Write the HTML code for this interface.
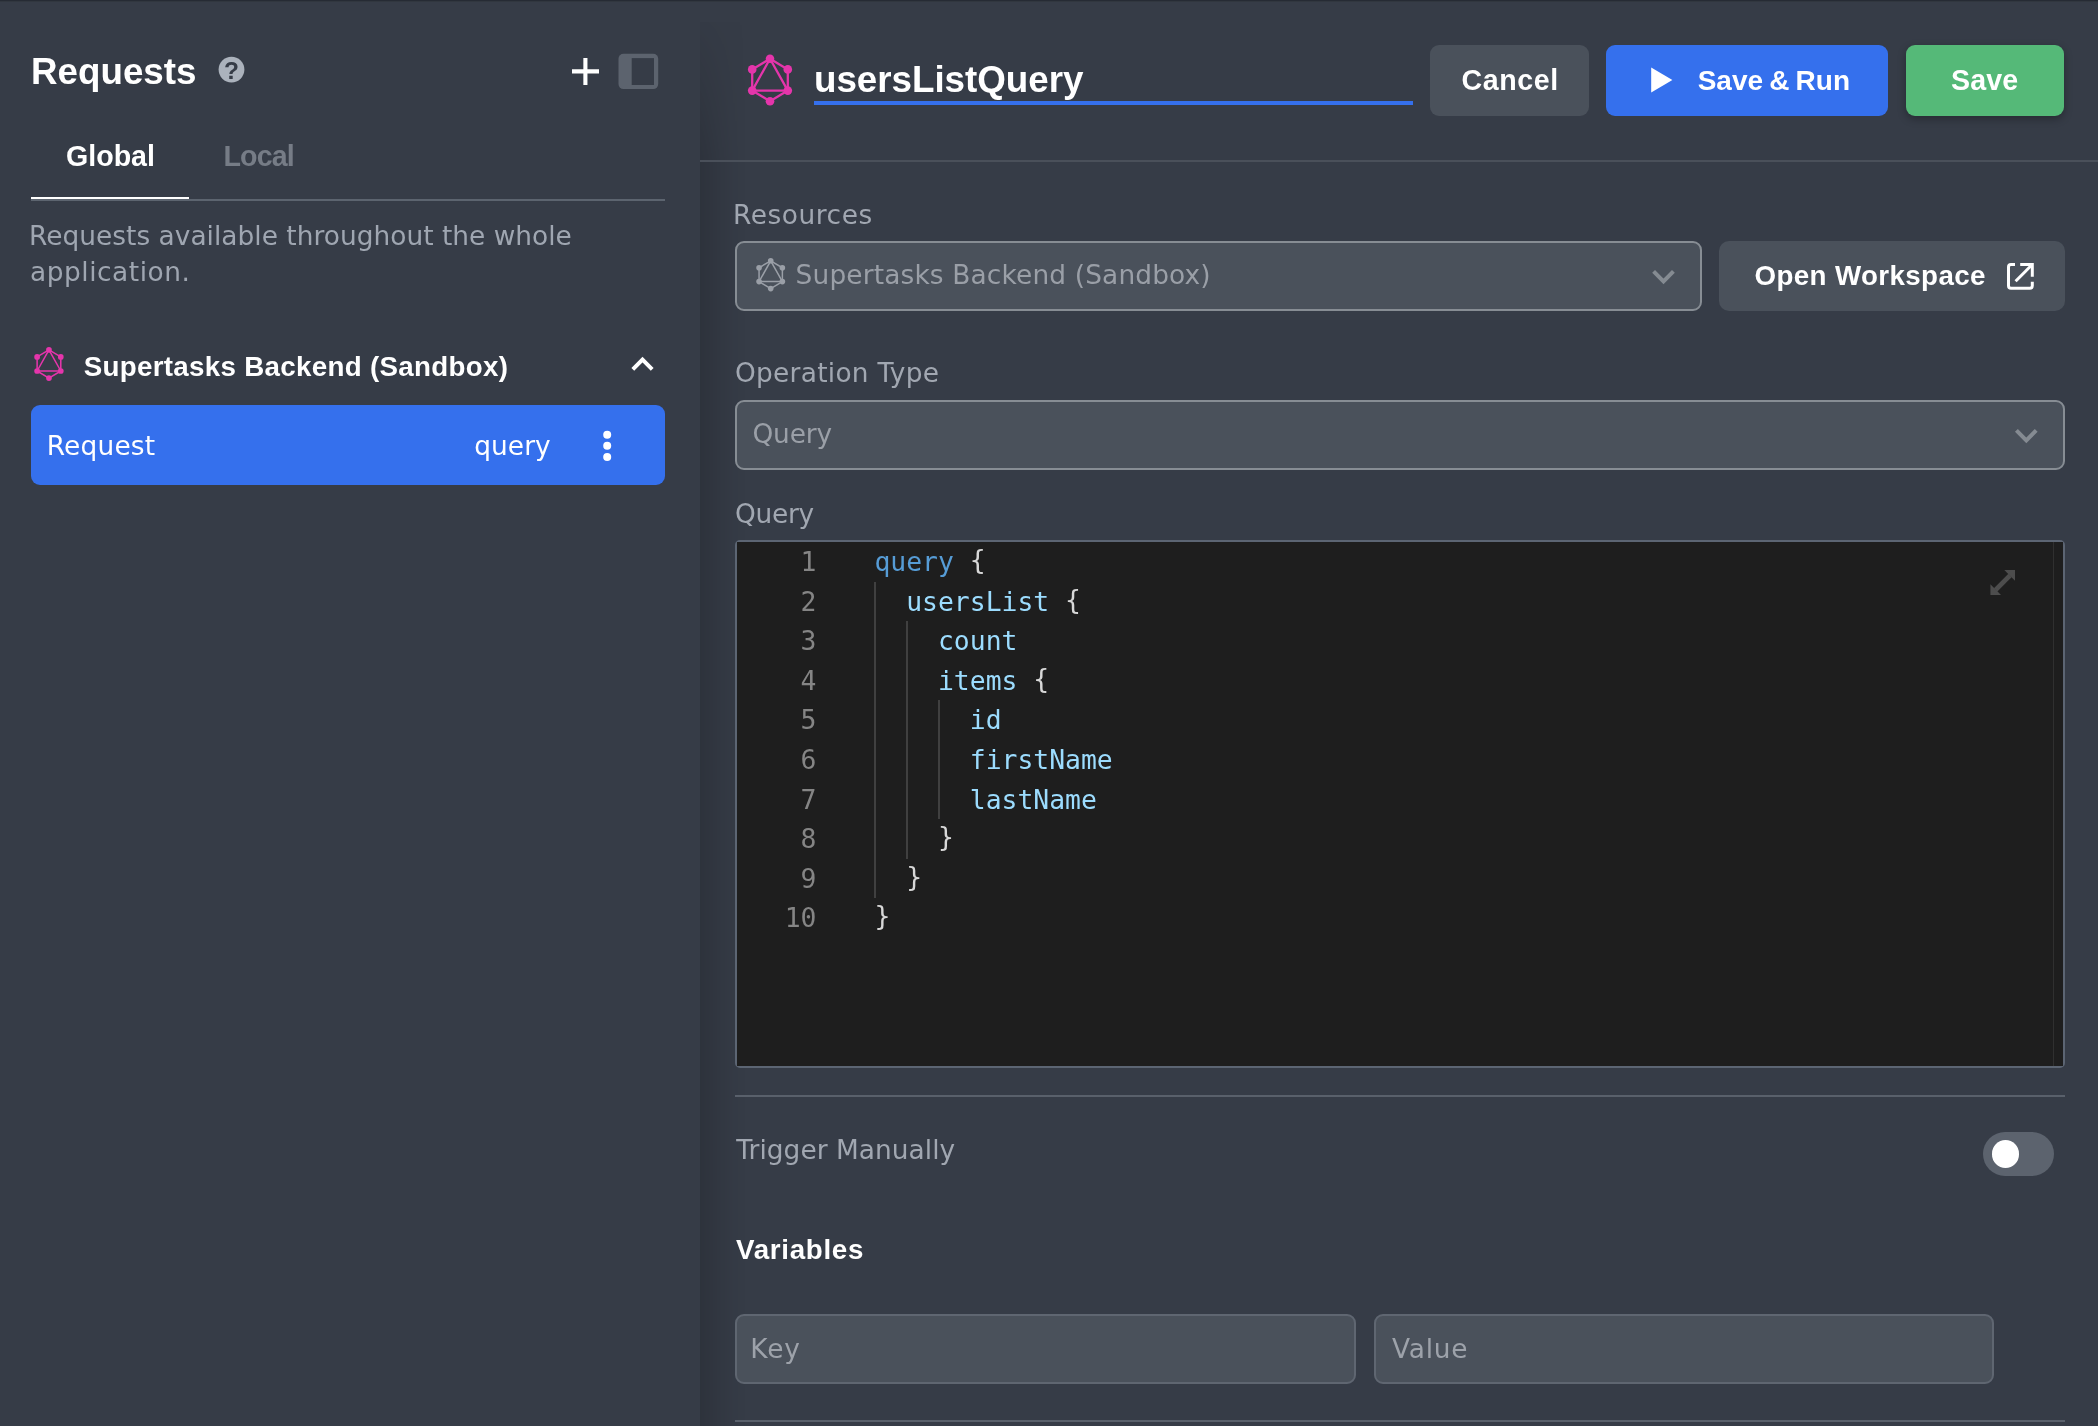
<!DOCTYPE html>
<html lang="en"><head><meta charset="utf-8"><title>Requests - usersListQuery</title>
<style>
html,body{margin:0;padding:0}
body{width:2098px;height:1426px;overflow:hidden;background:#363c47;position:relative;font-family:"Liberation Sans", sans-serif}
#root{position:absolute;left:0;top:0;width:2098px;height:1426px;overflow:hidden;will-change:transform}
h1,h2{margin:0}
.a,svg{position:absolute}
.t{position:absolute;display:block;white-space:nowrap;line-height:1}
.gql{overflow:visible}
#t_req{left:31.00px;top:54.09px;font-family:"Liberation Sans", sans-serif;font-size:36.75px;font-weight:700;color:#ffffff}
#t_glob{left:66.00px;top:141.59px;font-family:"Liberation Sans", sans-serif;font-size:28.6px;font-weight:700;color:#ffffff}
#t_loc{left:223.50px;top:141.59px;font-family:"Liberation Sans", sans-serif;font-size:28.6px;font-weight:700;color:#767c86;letter-spacing:-0.875px}
#t_d1{left:29.00px;top:223.47px;font-family:"DejaVu Sans", "Liberation Sans", sans-serif;font-size:26.4px;font-weight:400;color:#9fa6b1;letter-spacing:0.026px}
#t_d2{left:30.00px;top:258.97px;font-family:"DejaVu Sans", "Liberation Sans", sans-serif;font-size:26.4px;font-weight:400;color:#9fa6b1;letter-spacing:0.545px}
#t_grp{left:83.70px;top:353.24px;font-family:"Liberation Sans", sans-serif;font-size:27.72px;font-weight:700;color:#ffffff;letter-spacing:0.307px}
#t_item{left:15.70px;top:27.67px;font-family:"DejaVu Sans", "Liberation Sans", sans-serif;font-size:26.4px;font-weight:400;color:#ffffff;letter-spacing:0.217px}
#t_q{left:443.30px;top:27.67px;font-family:"DejaVu Sans", "Liberation Sans", sans-serif;font-size:26.4px;font-weight:400;color:#ffffff;letter-spacing:0.050px}
#t_title{left:814.00px;top:61.86px;font-family:"Liberation Sans", sans-serif;font-size:36.79px;font-weight:700;color:#ffffff;letter-spacing:-0.031px}
#t_cancel{left:31.50px;top:21.39px;font-family:"Liberation Sans", sans-serif;font-size:28.6px;font-weight:700;color:#ffffff;letter-spacing:0.580px}
#t_srun{left:91.70px;top:21.90px;font-family:"Liberation Sans", sans-serif;font-size:28.0px;font-weight:700;color:#ffffff;word-spacing:-1.650px}
#t_save{left:45.00px;top:21.39px;font-family:"Liberation Sans", sans-serif;font-size:28.6px;font-weight:700;color:#ffffff;letter-spacing:0.133px}
#t_res{left:733.00px;top:202.27px;font-family:"DejaVu Sans", "Liberation Sans", sans-serif;font-size:26.4px;font-weight:400;color:#a1a7b1;letter-spacing:0.550px}
#t_sel1{left:58.60px;top:18.67px;font-family:"DejaVu Sans", "Liberation Sans", sans-serif;font-size:26.4px;font-weight:400;color:#9a9fa7;letter-spacing:0.152px}
#t_open{left:35.50px;top:21.24px;font-family:"Liberation Sans", sans-serif;font-size:27.72px;font-weight:700;color:#ffffff;letter-spacing:0.385px}
#t_op{left:735.00px;top:359.67px;font-family:"DejaVu Sans", "Liberation Sans", sans-serif;font-size:26.4px;font-weight:400;color:#a1a7b1;letter-spacing:0.277px}
#t_sel2{left:15.50px;top:19.27px;font-family:"DejaVu Sans", "Liberation Sans", sans-serif;font-size:26.4px;font-weight:400;color:#9a9fa7;letter-spacing:-0.175px}
#t_ql{left:735.00px;top:501.07px;font-family:"DejaVu Sans", "Liberation Sans", sans-serif;font-size:26.4px;font-weight:400;color:#a1a7b1;letter-spacing:-0.250px}
#t_trig{left:736.20px;top:1136.67px;font-family:"DejaVu Sans", "Liberation Sans", sans-serif;font-size:26.4px;font-weight:400;color:#a1a7b1;letter-spacing:0.053px}
#t_vars{left:736.00px;top:1235.74px;font-family:"Liberation Sans", sans-serif;font-size:27.72px;font-weight:700;color:#ffffff;letter-spacing:0.700px}
#t_key{left:13.30px;top:20.17px;font-family:"DejaVu Sans", "Liberation Sans", sans-serif;font-size:26.4px;font-weight:400;color:#9da2aa;letter-spacing:0.850px}
#t_val{left:16.00px;top:20.17px;font-family:"DejaVu Sans", "Liberation Sans", sans-serif;font-size:26.4px;font-weight:400;color:#9da2aa;letter-spacing:0.750px}
#topline{left:0;top:0;width:2098px;height:2px;background:linear-gradient(#262b34 0,#262b34 50%,#31373f 50%,#31373f 100%)}
#rshadow{left:700px;top:22px;width:46px;height:1404px;background:linear-gradient(to right,rgba(0,0,0,.15),rgba(0,0,0,.085) 35%,rgba(0,0,0,.03) 70%,rgba(0,0,0,0));-webkit-mask-image:linear-gradient(to bottom,rgba(0,0,0,.15),#000 140px);mask-image:linear-gradient(to bottom,rgba(0,0,0,.15),#000 140px)}
#hdrline{left:700px;top:160px;width:1398px;height:2px;background:#4a505a}
#tabline{left:31px;top:199px;width:634px;height:2px;background:#5c646f}
#tabact{left:31px;top:197px;width:158px;height:2px;background:#fff}
#item{left:31px;top:405px;width:634px;height:80px;border-radius:9px;background:#3570ed}
#uline{left:814px;top:101px;width:599px;height:4px;background:#3570ed}
.btn{position:absolute;top:45px;height:71px;border-radius:9px}
#bcancel{left:1430px;width:159px;background:#4a515b}
#brun{left:1606px;width:282px;background:#3570ed}
#bsave{left:1906px;width:158px;background:#55b978;box-shadow:0 3px 8px rgba(0,0,0,.3)}
.inp{position:absolute;box-sizing:border-box;background:#4a515b;border:2px solid #878d94;border-radius:9px}
#sel1{left:735px;top:241px;width:967px;height:70px}
#sel2{left:735px;top:400px;width:1330px;height:70px}
#bopen{left:1719px;top:241px;width:346px;height:70px;background:#4a515b;border-radius:10px}
#ikey{left:735px;top:1314px;width:621px;height:70px;border-color:#5f6671}
#ival{left:1374px;top:1314px;width:620px;height:70px;border-color:#5f6671}
#editor{left:735px;top:540px;width:1330px;height:528px;box-sizing:border-box;border:2px solid #5c6573;border-radius:5px;background:#1e1e1e}
#edbg{left:0;top:0;width:1326px;height:524px;background:#1e1e1e}
#ovr{left:1315.8px;top:0;width:1.3px;height:524px;background:#303030}
.hr{position:absolute;left:735px;width:1330px;height:2px;background:#59606b}
#toggle{left:1983px;top:1132px;width:71px;height:44px;border-radius:22px;background:#5c636e}
#knob{left:8.5px;top:8.2px;width:27.6px;height:27.6px;border-radius:50%;background:#fff}
.ln,.cl{position:absolute;font-family:"DejaVu Sans Mono", "Liberation Mono", monospace;font-size:26.4px;line-height:39.6px;height:39.6px;white-space:pre}
.ln{left:0;width:79.5px;text-align:right;color:#858585}
.kw{color:#569cd6}.fd{color:#9cdcfe}.br{color:#d8d8d8;position:relative;top:-2px}
.ig{position:absolute;width:2px;background:#404040}
</style></head>
<body>
<div id="root">
<div class="a" id="topline"></div>

<aside id="sidebar" aria-label="Requests">
<h1 class="t" id="t_req">Requests</h1>
<svg style="left:218px;top:56px" width="27" height="27" viewBox="218 56 27 27" role="img" aria-label="help"><circle cx="231.5" cy="69.6" r="12.9" fill="#abb2bc"/><text x="231.5" y="78.7" text-anchor="middle" font-family="Liberation Sans, sans-serif" font-weight="700" font-size="24.5" fill="#363c47">?</text></svg>
<svg style="left:570px;top:56px" width="32" height="32" viewBox="570 56 32 32" role="img" aria-label="add"><path d="M572 71.4H599M585.4 58V85" stroke="#fff" stroke-width="4.1" fill="none"/></svg>
<svg style="left:616px;top:52px" width="46" height="40" viewBox="616 52 46 40" role="img" aria-label="panel"><rect x="618.5" y="53.8" width="39.7" height="35.3" rx="5" fill="#5c636e"/><rect x="631.7" y="58.1" width="22.3" height="26.9" fill="#363c47"/></svg>
<nav id="tabs">
<span class="t" id="t_glob">Global</span>
<span class="t" id="t_loc">Local</span>
<div class="a" id="tabline"></div>
<div class="a" id="tabact"></div>
</nav>
<p style="margin:0"><span class="t" id="t_d1">Requests available throughout the whole</span><span class="t" id="t_d2">application.</span></p>
<section id="group">
<svg class="gql" style="left:32.59px;top:346.44px" width="31.92" height="35.91" viewBox="0 0 48 54" fill="none" stroke="#e535ab" stroke-width="2.3" stroke-linejoin="round"><path d="M24 5.8L41.8 16.4V37.6L24 48.2L6.2 37.6V16.4Z"/><path d="M24 5.8L41.8 37.6H6.2Z"/><g fill="#e535ab" stroke="none"><circle cx="24" cy="5.8" r="4.3"/><circle cx="41.8" cy="16.4" r="4.3"/><circle cx="41.8" cy="37.6" r="4.3"/><circle cx="24" cy="48.2" r="4.3"/><circle cx="6.2" cy="37.6" r="4.3"/><circle cx="6.2" cy="16.4" r="4.3"/></g></svg>
<h2 class="t" id="t_grp">Supertasks Backend (Sandbox)</h2>
<svg style="left:626px;top:352px" width="34" height="26" viewBox="626 352 34 26" ><path d="M632.8 369.4L642.5 359.7L652.2 369.4" stroke="#fff" stroke-width="4" fill="none"/></svg>
<div class="a" id="item" role="button">
<span class="t" id="t_item">Request</span>
<span class="t" id="t_q">query</span>
<svg style="left:569px;top:23px" width="16" height="36" viewBox="600 428 16 36" fill="#fff"><circle cx="607.2" cy="434.7" r="4"/><circle cx="607.2" cy="445.8" r="4"/><circle cx="607.2" cy="457" r="4"/></svg>
</div>
</section>
</aside>

<main id="panel">
<div class="a" id="rshadow"></div>
<header id="hdr">
<svg class="gql" style="left:746.25px;top:53.20px" width="48.00" height="54.00" viewBox="0 0 48 54" fill="none" stroke="#e535ab" stroke-width="2.3" stroke-linejoin="round"><path d="M24 5.8L41.8 16.4V37.6L24 48.2L6.2 37.6V16.4Z"/><path d="M24 5.8L41.8 37.6H6.2Z"/><g fill="#e535ab" stroke="none"><circle cx="24" cy="5.8" r="4.3"/><circle cx="41.8" cy="16.4" r="4.3"/><circle cx="41.8" cy="37.6" r="4.3"/><circle cx="24" cy="48.2" r="4.3"/><circle cx="6.2" cy="37.6" r="4.3"/><circle cx="6.2" cy="16.4" r="4.3"/></g></svg>
<h1 class="t" id="t_title">usersListQuery</h1>
<div class="a" id="uline"></div>
<div class="btn" id="bcancel" role="button"><span class="t" id="t_cancel">Cancel</span></div>
<div class="btn" id="brun" role="button"><svg style="left:42px;top:19px" width="28" height="32" viewBox="1648 64 28 32" ><path d="M1651.2 67.6L1672.4 80L1651.2 92.5Z" fill="#fff"/></svg><span class="t" id="t_srun">Save &amp; Run</span></div>
<div class="btn" id="bsave" role="button"><span class="t" id="t_save">Save</span></div>
<div class="a" id="hdrline"></div>
</header>

<section id="form">
<label class="t" id="t_res">Resources</label>
<div class="inp" id="sel1" role="combobox">
<svg class="gql" style="left:17.88px;top:13.81px" width="31.44" height="35.37" viewBox="0 0 48 54" fill="none" stroke="#9a9fa7" stroke-width="2.3" stroke-linejoin="round"><path d="M24 5.8L41.8 16.4V37.6L24 48.2L6.2 37.6V16.4Z"/><path d="M24 5.8L41.8 37.6H6.2Z"/><g fill="#9a9fa7" stroke="none"><circle cx="24" cy="5.8" r="4.3"/><circle cx="41.8" cy="16.4" r="4.3"/><circle cx="41.8" cy="37.6" r="4.3"/><circle cx="24" cy="48.2" r="4.3"/><circle cx="6.2" cy="37.6" r="4.3"/><circle cx="6.2" cy="16.4" r="4.3"/></g></svg>
<span class="t" id="t_sel1">Supertasks Backend (Sandbox)</span>
<svg style="left:911px;top:21px" width="32" height="26" viewBox="1648 264 32 26" ><path d="M1653.6 271.4L1663.5 281.3L1673.4 271.4" stroke="#858b92" stroke-width="4" fill="none"/></svg>
</div>
<div class="a" id="bopen" role="button">
<span class="t" id="t_open">Open Workspace</span>
<svg style="left:281px;top:15px" width="40" height="40" viewBox="2000 256 40 40" fill="none" stroke="#fff" stroke-width="3"><path d="M2015 264.5H2011a2.5 2.5 0 0 0-2.5 2.5V285.8a2.5 2.5 0 0 0 2.5 2.5H2029.8a2.5 2.5 0 0 0 2.5-2.5V281.7"/><path d="M2020.2 264.5H2032.3V276.8"/><path d="M2015.6 281.2L2032 264.8"/></svg>
</div>

<label class="t" id="t_op">Operation Type</label>
<div class="inp" id="sel2" role="combobox">
<span class="t" id="t_sel2">Query</span>
<svg style="left:1273px;top:21px" width="32" height="26" viewBox="2010 423 32 26" ><path d="M2016.4 430.4L2026.3 440.3L2036.2 430.4" stroke="#858b92" stroke-width="4" fill="none"/></svg>
</div>

<label class="t" id="t_ql">Query</label>
<div class="a" id="editor">
<div class="a" id="edbg"></div>
<div class="a" id="ovr"></div>
<div class="ln" style="top:0.0px">1</div><div class="cl" style="top:0.0px;left:137.40px"><span class="kw">query</span><span class="br"> {</span></div>
<div class="ln" style="top:39.6px">2</div><div class="cl" style="top:39.6px;left:169.19px"><span class="fd">usersList</span><span class="br"> {</span></div>
<div class="ln" style="top:79.2px">3</div><div class="cl" style="top:79.2px;left:200.97px"><span class="fd">count</span></div>
<div class="ln" style="top:118.8px">4</div><div class="cl" style="top:118.8px;left:200.97px"><span class="fd">items</span><span class="br"> {</span></div>
<div class="ln" style="top:158.4px">5</div><div class="cl" style="top:158.4px;left:232.76px"><span class="fd">id</span></div>
<div class="ln" style="top:198.0px">6</div><div class="cl" style="top:198.0px;left:232.76px"><span class="fd">firstName</span></div>
<div class="ln" style="top:237.6px">7</div><div class="cl" style="top:237.6px;left:232.76px"><span class="fd">lastName</span></div>
<div class="ln" style="top:277.2px">8</div><div class="cl" style="top:277.2px;left:200.97px"><span class="br">}</span></div>
<div class="ln" style="top:316.8px">9</div><div class="cl" style="top:316.8px;left:169.19px"><span class="br">}</span></div>
<div class="ln" style="top:356.4px">10</div><div class="cl" style="top:356.4px;left:137.40px"><span class="br">}</span></div>
<i class="ig" style="left:137.1px;top:39.6px;height:316.8px"></i>
<i class="ig" style="left:168.9px;top:79.2px;height:237.6px"></i>
<i class="ig" style="left:200.7px;top:158.4px;height:118.8px"></i>
<svg style="left:1251px;top:26px" width="30" height="30" viewBox="1988 568 30 30" fill="#4d4d4d"><path d="M2015 570H2004.3L2015 580.8ZM1990.4 595V584.2L2001 595Z"/><path d="M1995.5 590L2010 575.5" stroke="#4d4d4d" stroke-width="4.6" fill="none"/></svg>
</div>

<div class="hr" style="top:1095px"></div>
<label class="t" id="t_trig">Trigger Manually</label>
<div class="a" id="toggle" role="switch" aria-checked="false"><div class="a" id="knob"></div></div>

<h2 class="t" id="t_vars">Variables</h2>
<div class="inp" id="ikey"><span class="t" id="t_key">Key</span></div>
<div class="inp" id="ival"><span class="t" id="t_val">Value</span></div>
<div class="hr" style="top:1420px"></div>
</section>
</main>
</div>
</body></html>
